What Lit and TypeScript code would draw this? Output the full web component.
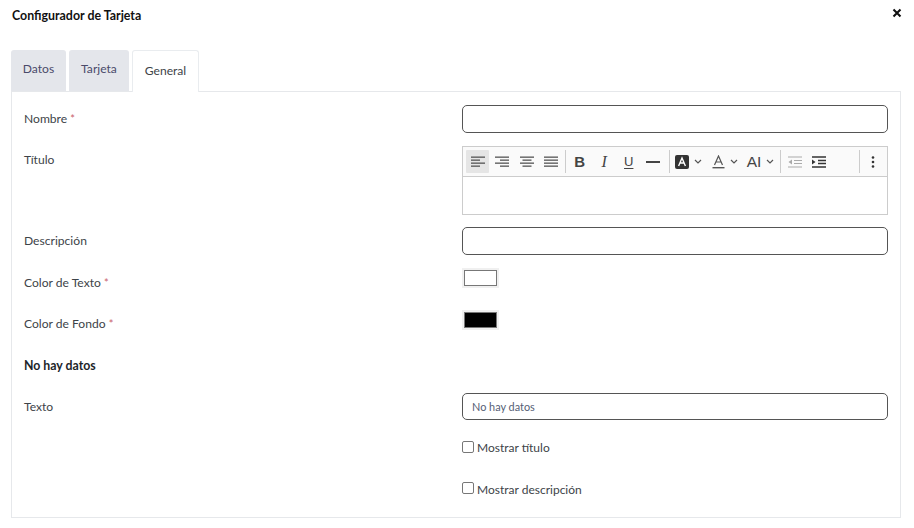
import { LitElement, html, css, svg } from "lit";
import { customElement } from "lit/decorators.js";

const alignIcon = (lines: [number, number][]) => html`<svg width="16" height="14" viewBox="0 0 16 14">${lines.map(
  ([x, w], i) => svg`<rect x=${x} y=${1.5 + i * 3} width=${w} height="1.3" fill="#555"></rect>`
)}</svg>`;
const chevron = html`<svg class="chev" width="8" height="6" viewBox="0 0 8 6"><path d="M1 1l3 3 3-3" fill="none" stroke="#555" stroke-width="1.2"/></svg>`;

@customElement("app-root")
export class AppRoot extends LitElement {
  static styles = css`
    :host { display: block; width: 914px; height: 528px; background: #fff; font-family: "Lato", "Open Sans", sans-serif; font-size: 12.1px; color: #3d4348; overflow: hidden; }
    .page { padding: 8px 13px 0 11px; box-sizing: border-box; height: 528px; display: flex; flex-direction: column; }
    .head { display: flex; justify-content: space-between; align-items: flex-start; height: 42px; flex: none; }
    .title { font-weight: 700; font-size: 12.4px; color: #111; line-height: 15px; padding-left: 1px; }
    .close { margin-right: -1px; }
    .tabs { display: flex; gap: 3px; height: 41px; flex: none; }
    .tab { display: flex; align-items: center; justify-content: center; border-radius: 3px 3px 0 0; background: #e4e6eb; color: #4a4a6a; box-sizing: border-box; padding-bottom: 4px; }
    .tab.d { width: 55px; }
    .tab.t { width: 60px; }
    .tab.g { width: 67px; background: #fff; color: #3d4348; border: 1px solid #e9ecef; border-bottom: 0; padding-bottom: 3px; margin-bottom: -1px; position: relative; z-index: 1; }
    .panel { width: 890px; height: 427px; box-sizing: border-box; border: 1px solid #e6e8eb; padding: 13px 12px 0 12px; display: flex; flex-direction: column; gap: 13.4px; }
    .row { display: grid; grid-template-columns: 438px 426px; height: 28px; flex: none; }
    .row.ed { height: 67.5px; }
    .lab { line-height: 28px; }
    .lab.b { font-weight: 700; color: #212529; font-size: 12.3px; padding-top: 1px; }
    .req { color: #c9606a; font-size: 11px; }
    .inp { height: 27.5px; box-sizing: border-box; border: 1px solid #555; border-radius: 5px; padding: 0 9px; font-size: 10.9px; line-height: 26px; color: #555e75; }
    .editor { height: 69px; box-sizing: border-box; border: 1px solid #ccc; display: flex; flex-direction: column; }
    .bar { height: 29.5px; flex: none; box-sizing: border-box; border-bottom: 1px solid #ccc; background: #fafafa; display: flex; align-items: center; padding-left: 3px; }
    .btn { width: 24.5px; height: 23px; display: flex; align-items: center; justify-content: center; flex: none; color: #444; }
    .btn.on { background: #e5e5e5; border-radius: 1px; width: 23px; margin-right: 1px; }
    .btn.w { width: 36px; gap: 5px; }
    .sep { width: 1px; height: 23px; background: #ccc; margin: 0 1.5px; flex: none; }
    .sep.m { margin-left: 3.5px; margin-right: 0.5px; }
    .sep.r { margin-right: 0.5px; }
    .sp { flex: 1; }
    .ltr { font-family: "Liberation Sans", sans-serif; font-size: 15px; line-height: 1; }
    .ai { font-size: 15.5px; }
    .bold { font-weight: 700; }
    .it { font-family: "Liberation Serif", serif; font-style: italic; font-size: 16px; }
    .un { text-decoration: underline; font-size: 13px; text-underline-offset: 2px; font-weight: 400; }
    .swatch { display: block; width: 37px; height: 20px; box-sizing: border-box; border: 2px solid #f0f0f0; margin-top: -0.4px; }
    .swatch i { display: block; height: 100%; box-sizing: border-box; border: 1px solid #777; background: #fff; }
    .swatch.k i { background: #000; }
    .check { display: flex; align-items: flex-start; gap: 3px; line-height: 28px; font-size: 12px; }
    .box { width: 12px; height: 12px; box-sizing: border-box; border: 1px solid #777; border-radius: 2px; margin-top: 6.5px; background: #fff; }
  `;

  render() {
    return html`<div class="page">
      <div class="head">
        <div class="title">Configurador de Tarjeta</div>
        <svg class="close" width="10" height="10" viewBox="0 0 10 10"><path d="M1.5 1.5l7 7M8.5 1.5l-7 7" stroke="#111" stroke-width="2.1"/></svg>
      </div>
      <div class="tabs">
        <div class="tab d">Datos</div>
        <div class="tab t">Tarjeta</div>
        <div class="tab g">General</div>
      </div>
      <div class="panel">
        <div class="row"><div class="lab">Nombre <span class="req">*</span></div><div class="inp"></div></div>
        <div class="row ed"><div class="lab">Título</div>
          <div class="editor">
            <div class="bar">
              <div class="btn on">${alignIcon([[1, 14], [1, 9], [1, 14], [1, 9]])}</div>
              <div class="btn">${alignIcon([[1, 14], [6, 9], [1, 14], [6, 9]])}</div>
              <div class="btn">${alignIcon([[1, 14], [3.5, 9], [1, 14], [3.5, 9]])}</div>
              <div class="btn">${alignIcon([[1, 14], [1, 14], [1, 14], [1, 14]])}</div>
              <div class="sep"></div>
              <div class="btn ltr bold">B</div>
              <div class="btn ltr it">I</div>
              <div class="btn ltr un">U</div>
              <div class="btn"><svg width="14" height="4" viewBox="0 0 14 4"><rect y="1" width="14" height="2" fill="#444"/></svg></div>
              <div class="sep m"></div>
              <div class="btn w"><svg width="14" height="14" viewBox="0 0 14 14"><rect width="14" height="14" rx="2" fill="#333"/><path d="M3.6 11L7 3l3.4 8M5 8h4" fill="none" stroke="#fff" stroke-width="1.4"/></svg>${chevron}</div>
              <div class="btn w"><svg width="13" height="14" viewBox="0 0 13 14"><path d="M2.5 10L6.5 1l4 9M4 7h5" fill="none" stroke="#555" stroke-width="1.2"/><rect x="0.5" y="12" width="12" height="1.4" fill="#555"/></svg>${chevron}</div>
              <div class="btn w"><span class="ltr ai">AI</span>${chevron}</div>
              <div class="sep"></div>
              <div class="btn"><svg width="16" height="12" viewBox="0 0 16 12"><path d="M1 1h14M7 4.5h8M7 7.5h8M1 11h14" stroke="#aaa" stroke-width="1.2"/><path d="M5 3.5L1.5 6 5 8.5z" fill="#aaa"/></svg></div>
              <div class="btn"><svg width="16" height="12" viewBox="0 0 16 12"><path d="M1 1h14M7 4.5h8M7 7.5h8M1 11h14" stroke="#333" stroke-width="1.4"/><path d="M1 3.5L4.5 6 1 8.5z" fill="#333"/></svg></div>
              <div class="sp"></div>
              <div class="sep r"></div>
              <div class="btn"><svg width="4" height="12" viewBox="0 0 4 12"><circle cx="2" cy="1.5" r="1.3" fill="#333"/><circle cx="2" cy="6" r="1.3" fill="#333"/><circle cx="2" cy="10.5" r="1.3" fill="#333"/></svg></div>
              <div style="width:2px"></div>
            </div>
          </div>
        </div>
        <div class="row"><div class="lab">Descripción</div><div class="inp"></div></div>
        <div class="row"><div class="lab">Color de Texto <span class="req">*</span></div><div><span class="swatch"><i></i></span></div></div>
        <div class="row"><div class="lab">Color de Fondo <span class="req">*</span></div><div><span class="swatch k"><i></i></span></div></div>
        <div class="row"><div class="lab b">No hay datos</div><div></div></div>
        <div class="row"><div class="lab">Texto</div><div class="inp">No hay datos</div></div>
        <div class="row"><div></div><div class="check"><span class="box"></span>Mostrar título</div></div>
        <div class="row"><div></div><div class="check"><span class="box"></span>Mostrar descripción</div></div>
      </div>
    </div>`;
  }
}
